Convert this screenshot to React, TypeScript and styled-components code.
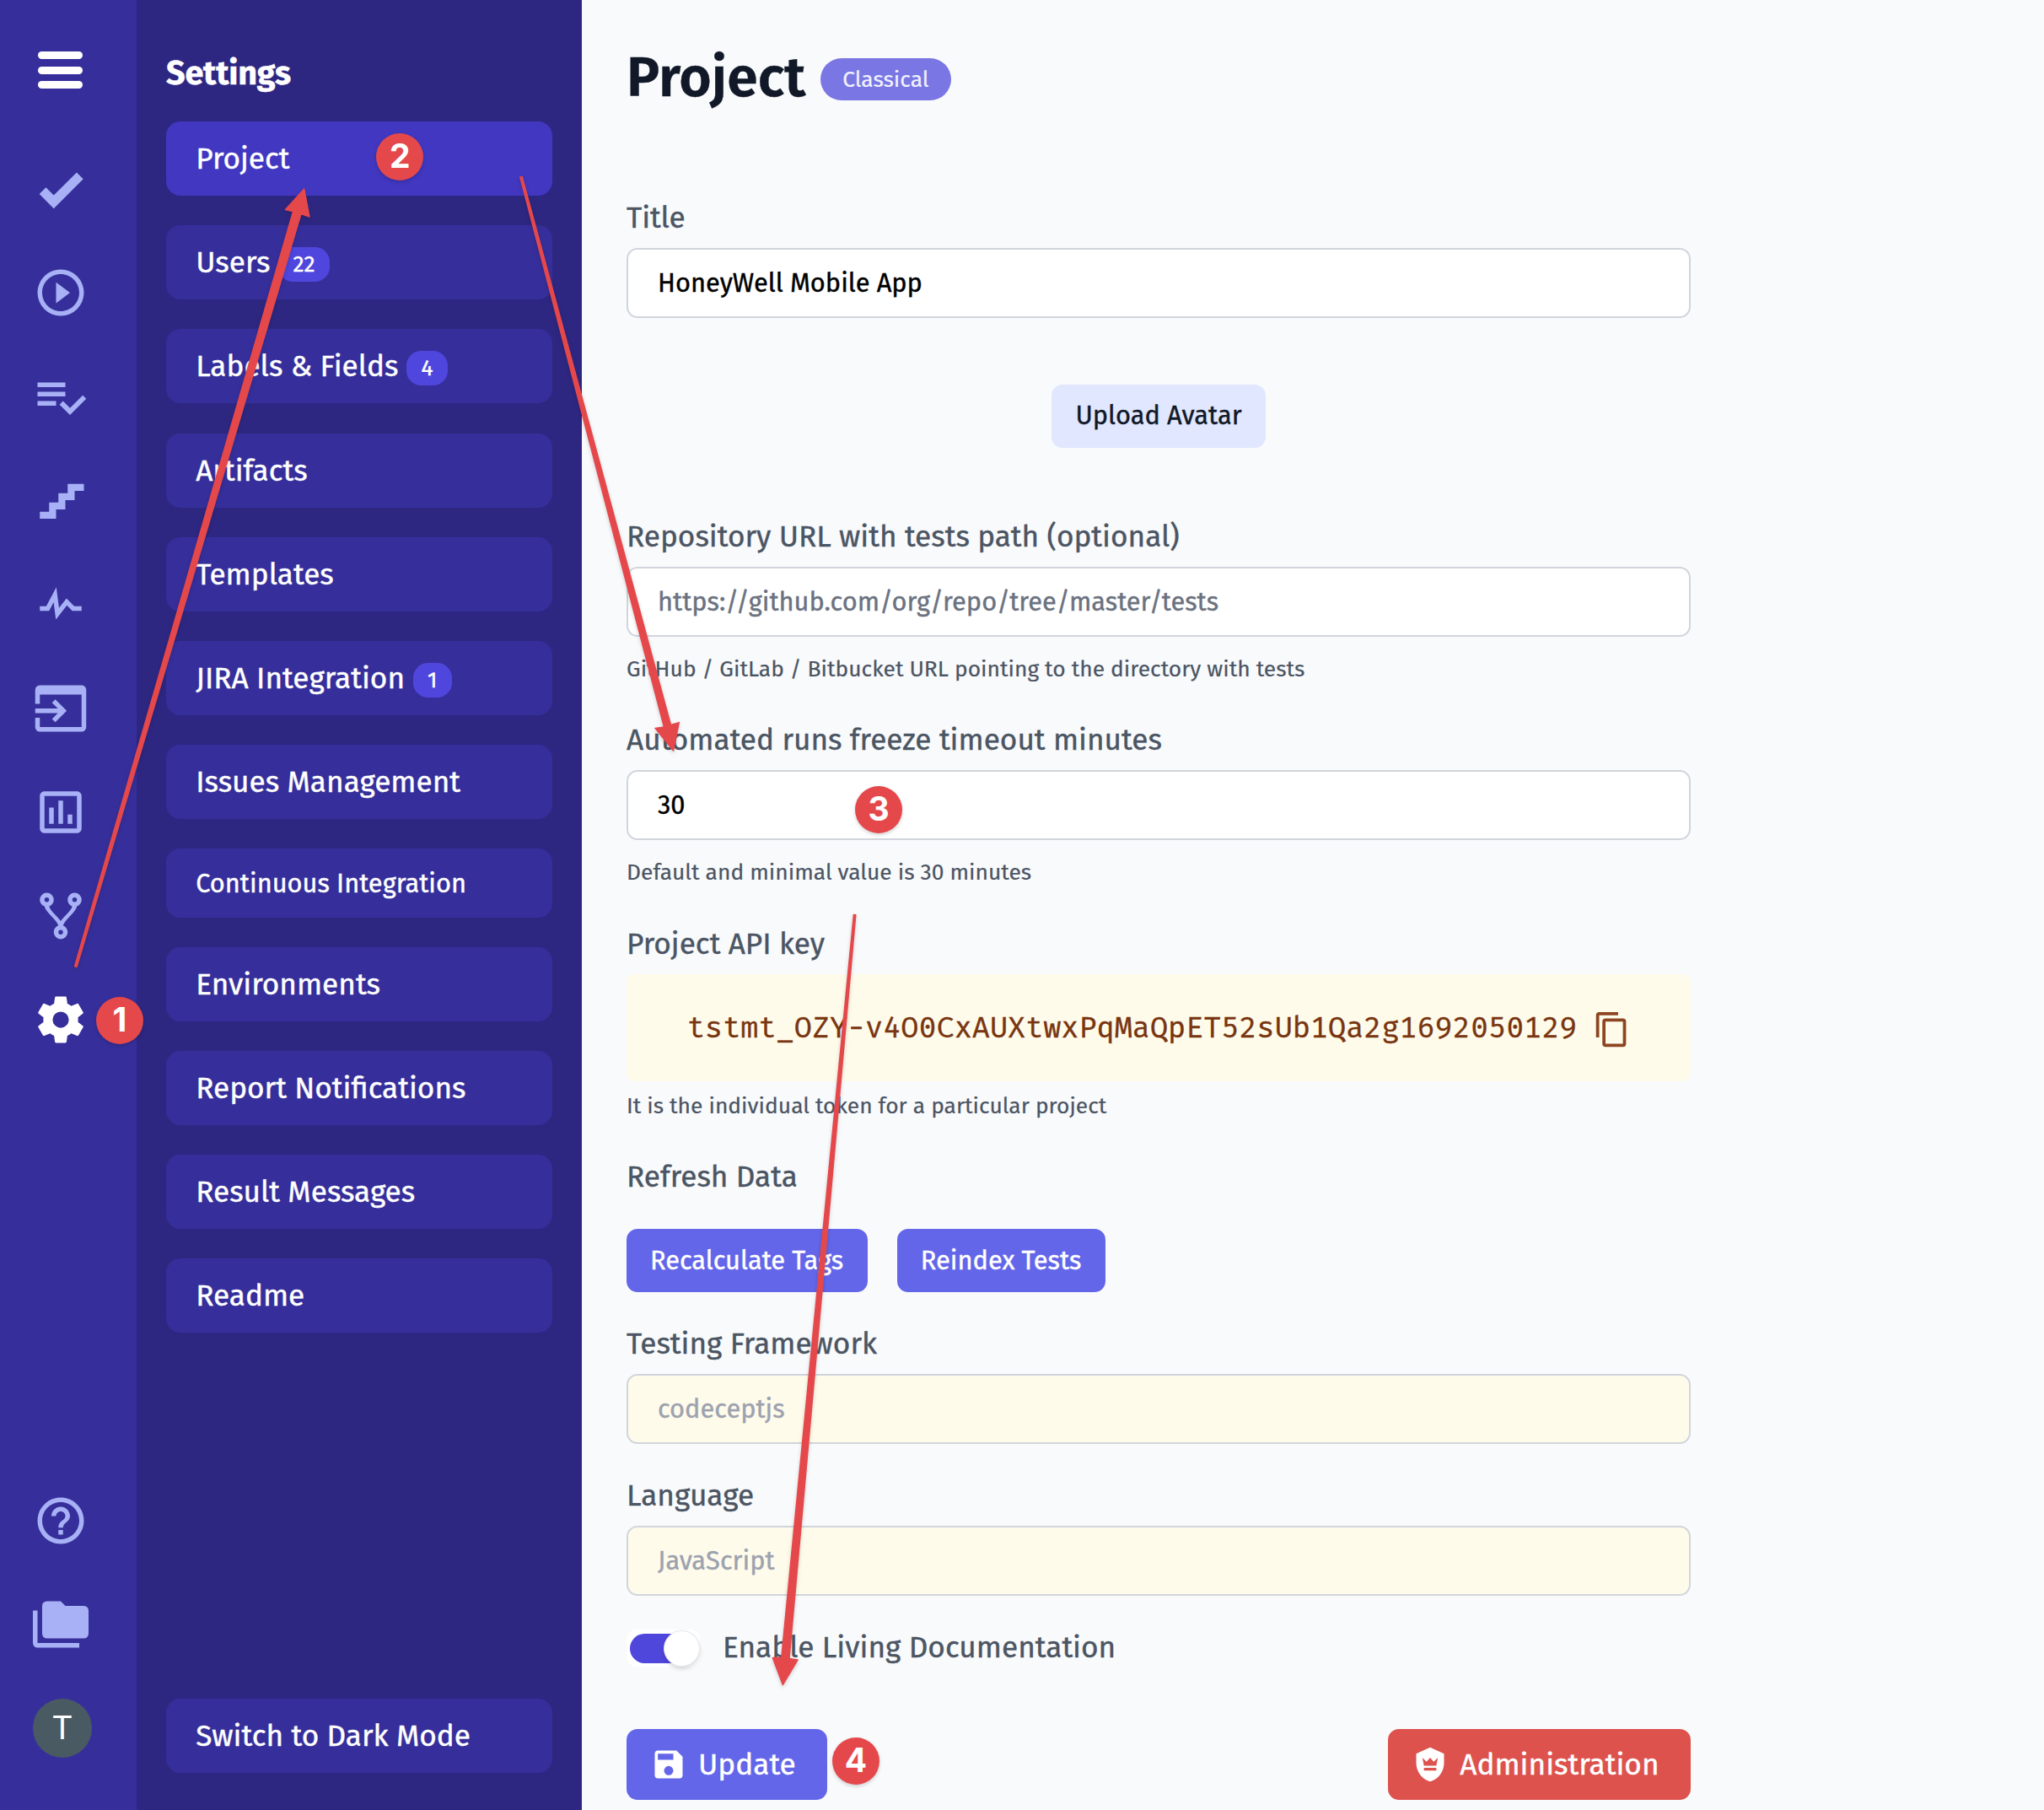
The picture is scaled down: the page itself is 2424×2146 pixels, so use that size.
import React from "react";
import styled, { createGlobalStyle } from "styled-components";

const Global = createGlobalStyle`
  * { box-sizing: border-box; }
  body { margin: 0; background: #f9fafc; }
`;
const SANS = `"Fira Sans", "Noto Sans", sans-serif`;
const MONO = `"Fira Mono", "Noto Sans Mono", "Liberation Mono", monospace`;

const Page = styled.div`
  position: relative;
  display: flex;
  width: 2424px;
  height: 2146px;
  overflow: hidden;
  background: #f9fafc;
  font-family: ${SANS};
  font-size: 35.2px;
  white-space: nowrap;
  -webkit-text-stroke: 0.4px;
`;

const Rail = styled.nav`
  display: flex;
  flex-direction: column;
  width: 162px;
  padding: 61px 0 62px 39px;
  background: #362f9b;
`;
const Burger = styled.div`
  display: flex;
  flex-direction: column;
  gap: 8.5px;
  width: 53px;
  margin: 0 0 85.7px 6px;
`;
const Bar = styled.span`
  height: 9px;
  border-radius: 4.5px;
  background: #fff;
`;
const IconList = styled.div<{ $bottom?: boolean }>`
  display: flex;
  flex-direction: column;
  gap: 57.2px;
  margin-top: ${(p) => (p.$bottom ? "auto" : "0")};
`;
const Icon = styled.svg<{ $size?: number; $color?: string }>`
  display: block;
  flex: none;
  width: ${(p) => p.$size ?? 66}px;
  height: ${(p) => p.$size ?? 66}px;
  fill: ${(p) => p.$color ?? "#a8b1f5"};
`;
const Avatar = styled.div`
  display: flex;
  align-items: center;
  justify-content: center;
  width: 70px;
  height: 70px;
  margin-top: -2.2px;
  border-radius: 50%;
  background: #4a5a62;
  color: #fff;
  font: 400 39px Roboto, sans-serif;
  -webkit-text-stroke: 0;
`;

const Panel = styled.aside`
  display: flex;
  flex-direction: column;
  width: 528px;
  padding: 63px 35px 44px;
  background: #2e2782;
  color: #fff;
`;
const PanelTitle = styled.h2`
  margin: 0 0 33px;
  font-size: 39.6px;
  line-height: 48px;
  font-weight: 700;
  letter-spacing: -0.2px;
`;
const Menu = styled.div`
  display: flex;
  flex-direction: column;
  gap: 35.2px;
  flex: 1;
`;
const MenuItem = styled.a<{ $active?: boolean; $small?: boolean; $last?: boolean }>`
  display: flex;
  align-items: center;
  height: ${(p) => (p.$small ? 81.4 : 88)}px;
  margin-top: ${(p) => (p.$last ? "auto" : "0")};
  padding: 0 35.2px;
  border-radius: 17px;
  background: ${(p) => (p.$active ? "#4137c1" : "#362f9b")};
  font-size: ${(p) => (p.$small ? 30.8 : 35.2)}px;
  font-weight: 400;
`;
const Count = styled.span`
  margin: 5px 0 0 9.5px;
  padding: 0 17.6px;
  border-radius: 17.6px;
  background: #4f46dd;
  font-size: 26.4px;
  line-height: 41px;
`;

const Main = styled.main`
  display: flex;
  flex-direction: column;
  width: 1315px;
  padding: 56px 0 0 53px;
  color: #4b5563;
`;
const Header = styled.header`
  display: flex;
  align-items: flex-start;
  height: 72px;
`;
const Title = styled.h1`
  margin: 0;
  color: #111827;
  font-size: 66px;
  line-height: 72px;
  font-weight: 600;
`;
const Pill = styled.span`
  margin: 13px 0 0 17.6px;
  padding: 0 26.4px;
  border-radius: 25px;
  background: #7a76e3;
  color: #f1f2ff;
  font-size: 26.4px;
  line-height: 50px;
  -webkit-text-stroke: 0.2px;
`;
const Field = styled.section<{ $top: number }>`
  display: flex;
  flex-direction: column;
  margin-top: ${(p) => p.$top}px;
`;
const Label = styled.label`
  line-height: 53px;
  margin-bottom: 9px;
`;
const Input = styled.div<{ $tone?: "placeholder" | "disabled" }>`
  height: 83px;
  padding: 0 35px;
  border: 2px solid #d1d5db;
  border-radius: 13px;
  background: ${(p) => (p.$tone === "disabled" ? "#fffbeb" : "#fff")};
  color: ${(p) => (p.$tone === "disabled" ? "#9ca3af" : p.$tone === "placeholder" ? "#6b7280" : "#000")};
  font-size: 30.8px;
  line-height: 79px;
`;
const Hint = styled.p<{ $top?: number }>`
  margin: ${(p) => p.$top ?? 18}px 0 0;
  font-size: 26.4px;
  line-height: 40px;
  -webkit-text-stroke: 0.2px;
`;
const UploadButton = styled.button`
  align-self: center;
  height: 75px;
  margin-top: 79px;
  padding: 0 28.6px 2px;
  border: 0;
  border-radius: 13px;
  background: #e0e7ff;
  color: #111827;
  font: 400 30.8px ${SANS};
  -webkit-text-stroke: 0.4px;
`;
const KeyBox = styled.div`
  display: flex;
  align-items: center;
  height: 127px;
  padding-left: 72px;
  border-radius: 9px;
  background: #fffbeb;
  color: #78350f;
  font-family: ${MONO};
  font-size: 35.2px;
`;
const KeyText = styled.code`
  padding-bottom: 2px;
  font-family: inherit;
  font-size: inherit;
`;
const CopyIcon = styled(Icon)`
  margin: 4px 0 0 18px;
`;
const ButtonRow = styled.div<{ $top: number; $between?: boolean }>`
  display: flex;
  gap: 35px;
  justify-content: ${(p) => (p.$between ? "space-between" : "flex-start")};
  margin-top: ${(p) => p.$top}px;
`;
const Button = styled.button<{ $large?: boolean; $danger?: boolean }>`
  display: flex;
  align-items: center;
  gap: 13px;
  height: ${(p) => (p.$large ? 84 : 75)}px;
  padding: 0 ${(p) => (p.$large ? 37.5 : 28.6)}px 1px 28px;
  border: 0;
  border-radius: 13px;
  background: ${(p) => (p.$danger ? "#dd524d" : "#6366e9")};
  color: #fff;
  font: 400 ${(p) => (p.$large ? 35.2 : 30.8)}px ${SANS};
  -webkit-text-stroke: 0.4px;
`;
const ToggleRow = styled.div`
  display: flex;
  align-items: center;
  height: 44px;
  margin-top: 40px;
`;
const Toggle = styled.div`
  display: flex;
  align-items: center;
  width: 87px;
  height: 44px;
  margin-right: 27px;
  padding-left: 4px;
  border-radius: 12px;
  background: #fff;
`;
const ToggleLabel = styled.label`
  padding-bottom: 3px;
`;
const Track = styled.span`
  width: 75px;
  height: 35px;
  margin-right: -35px;
  border-radius: 17.5px;
  background: #4f46dc;
`;
const Knob = styled.span`
  width: 43px;
  height: 43px;
  border: 1.5px solid #e5e7eb;
  border-radius: 50%;
  background: #fff;
  box-shadow: 0 3px 5px rgba(0, 0, 0, 0.14);
`;

const Overlay = styled.svg`
  position: absolute;
  inset: 0;
  fill: #e5484b;
  stroke: #e5484b;
  stroke-width: 1.5;
  stroke-linejoin: round;
  filter: drop-shadow(0 2px 2px rgba(0, 0, 0, 0.18));
`;
const Marker = styled.div<{ $x: number; $y: number }>`
  position: absolute;
  left: ${(p) => p.$x - 28}px;
  top: ${(p) => p.$y - 28}px;
  width: 56px;
  height: 56px;
  border-radius: 50%;
  background: #e5484b;
  box-shadow: 0 2px 4px rgba(0, 0, 0, 0.18);
  color: #fff;
  font: 700 39px/54px Inter, sans-serif;
  text-align: center;
  -webkit-text-stroke: 0;
`;

const Glyph = ({ d, size, color }: { d: string; size?: number; color?: string }) => (
  <Icon viewBox="0 0 24 24" $size={size} $color={color}>
    <path d={d} fillRule="evenodd" />
  </Icon>
);

const railIcons = [
  "M9,20.42L2.79,14.21L5.62,11.38L9,14.77L18.88,4.88L21.71,7.71L9,20.42Z",
  "M12,20C7.59,20 4,16.41 4,12C4,7.59 7.59,4 12,4C16.41,4 20,7.59 20,12C20,16.41 16.41,20 12,20M12,2A10,10 0 0,0 2,12A10,10 0 0,0 12,22A10,10 0 0,0 22,12A10,10 0 0,0 12,2M10,16.5L16,12L10,7.5V16.5Z",
  "M14 10H2v2h12v-2zm0-4H2v2h12V6zM2 16h8v-2H2v2zm19.5-4.5L23 13l-6.99 7-4.51-4.5L13 14l3.01 3 5.49-5.5z",
  "M15,5V9H11V13H7V17H3V20H10V16H14V12H18V8H22V5H15Z",
  "M3,13H5.79L10.1,4.79L11.28,13.75L14.5,9.66L17.83,13H21V15H17L14.67,12.67L9.92,18.73L8.94,11.31L7,15H3V13Z",
  "M1,12H10.76L8.26,9.5L9.67,8.08L14.59,13L9.67,17.92L8.26,16.5L10.76,14H1V12M21,2C22.11,2 23,2.9 23,4V20A2,2 0 0,1 21,22H3A2,2 0 0,1 1,20V16H3V20H21V6H3V10H1V4A2,2 0 0,1 3,2H21Z",
  "M19 3H5c-1.1 0-2 .9-2 2v14c0 1.1.9 2 2 2h14c1.1 0 2-.9 2-2V5c0-1.1-.9-2-2-2zm0 16H5V5h14v14zM7 10h2v7H7zM11 7h2v10h-2zM15 13h2v4h-2z",
  "M6,2A3,3 0 0,1 9,5C9,6.28 8.19,7.38 7.06,7.81C7.15,8.27 7.39,8.83 8,9.63C9,10.92 11,12.83 12,14.17C13,12.83 15,10.92 16,9.63C16.61,8.83 16.85,8.27 16.94,7.81C15.81,7.38 15,6.28 15,5A3,3 0 0,1 18,2A3,3 0 0,1 21,5C21,6.32 20.14,7.45 18.95,7.85C18.87,8.37 18.64,9 18,9.83C17,11.17 15,13.08 14,14.38C13.39,15.17 13.15,15.73 13.06,16.19C14.19,16.62 15,17.72 15,19A3,3 0 0,1 12,22A3,3 0 0,1 9,19C9,17.72 9.81,16.62 10.94,16.19C10.85,15.73 10.61,15.17 10,14.38C9,13.08 7,11.17 6,9.83C5.36,9 5.13,8.37 5.05,7.85C3.86,7.45 3,6.32 3,5A3,3 0 0,1 6,2M6,4A1,1 0 0,0 5,5A1,1 0 0,0 6,6A1,1 0 0,0 7,5A1,1 0 0,0 6,4M18,4A1,1 0 0,0 17,5A1,1 0 0,0 18,6A1,1 0 0,0 19,5A1,1 0 0,0 18,4M12,18A1,1 0 0,0 11,19A1,1 0 0,0 12,20A1,1 0 0,0 13,19A1,1 0 0,0 12,18Z",
];
const cog =
  "M12,15.5A3.5,3.5 0 0,1 8.5,12A3.5,3.5 0 0,1 12,8.5A3.5,3.5 0 0,1 15.5,12A3.5,3.5 0 0,1 12,15.5M19.43,12.97C19.47,12.65 19.5,12.33 19.5,12C19.5,11.67 19.47,11.34 19.43,11L21.54,9.37C21.73,9.22 21.78,8.95 21.66,8.73L19.66,5.27C19.54,5.05 19.27,4.96 19.05,5.05L16.56,6.05C16.04,5.66 15.5,5.32 14.87,5.07L14.5,2.42C14.46,2.18 14.25,2 14,2H10C9.75,2 9.54,2.18 9.5,2.42L9.13,5.07C8.5,5.32 7.96,5.66 7.44,6.05L4.95,5.05C4.73,4.96 4.46,5.05 4.34,5.27L2.34,8.73C2.21,8.95 2.27,9.22 2.46,9.37L4.57,11C4.53,11.34 4.5,11.67 4.5,12C4.5,12.33 4.53,12.65 4.57,12.97L2.46,14.63C2.27,14.78 2.21,15.05 2.34,15.27L4.34,18.73C4.46,18.95 4.73,19.03 4.95,18.95L7.44,17.94C7.96,18.34 8.5,18.68 9.13,18.93L9.5,21.58C9.54,21.82 9.75,22 10,22H14C14.25,22 14.46,21.82 14.5,21.58L14.87,18.93C15.5,18.67 16.04,18.34 16.56,17.94L19.05,18.95C19.27,19.03 19.54,18.95 19.66,18.73L21.66,15.27C21.78,15.05 21.73,14.78 21.54,14.63L19.43,12.97Z";
const help =
  "M11 18h2v-2h-2v2zm1-16C6.48 2 2 6.48 2 12s4.48 10 10 10 10-4.48 10-10S17.52 2 12 2zm0 18c-4.41 0-8-3.59-8-8s3.59-8 8-8 8 3.59 8 8-3.59 8-8 8zm0-14c-2.21 0-4 1.79-4 4h2c0-1.1.9-2 2-2s2 .9 2 2c0 2-3 1.75-3 5h2c0-2.25 3-2.5 3-5 0-2.21-1.79-4-4-4z";
const folders =
  "M22,4H14L12,2H6A2,2 0 0,0 4,4V16A2,2 0 0,0 6,18H22A2,2 0 0,0 24,16V6A2,2 0 0,0 22,4M2,6H0V11H0V20A2,2 0 0,0 2,22H20V20H2V6Z";
const copy =
  "M19,21H8V7H19M19,5H8A2,2 0 0,0 6,7V21A2,2 0 0,0 8,23H19A2,2 0 0,0 21,21V7A2,2 0 0,0 19,5M16,1H4A2,2 0 0,0 2,3V17H4V3H16V1Z";
const save =
  "M15,9H5V5H15M12,19A3,3 0 0,1 9,16A3,3 0 0,1 12,13A3,3 0 0,1 15,16A3,3 0 0,1 12,19M17,3H5C3.89,3 3,3.9 3,5V19A2,2 0 0,0 5,21H19A2,2 0 0,0 21,19V7L17,3Z";
const shieldCrown =
  "M12,1L3,5V11C3,16.55 6.84,21.74 12,23C17.16,21.74 21,16.55 21,11V5L12,1M16,16H8V14.2H16V16M16,12.8H8L7,7.7L9.67,10.2L12,7.7L14.33,10.2L17,7.7L16,12.8Z";

const menu: { text: string; count?: number; active?: boolean; small?: boolean }[] = [
  { text: "Project", active: true },
  { text: "Users", count: 22 },
  { text: "Labels & Fields", count: 4 },
  { text: "Artifacts" },
  { text: "Templates" },
  { text: "JIRA Integration", count: 1 },
  { text: "Issues Management" },
  { text: "Continuous Integration", small: true },
  { text: "Environments" },
  { text: "Report Notifications" },
  { text: "Result Messages" },
  { text: "Readme" },
];

export default function App() {
  return (
    <Page>
      <Global />
      <Rail>
        <Burger>
          <Bar />
          <Bar />
          <Bar />
        </Burger>
        <IconList>
          {railIcons.map((d) => (
            <Glyph key={d} d={d} />
          ))}
          <Glyph d={cog} color="#fff" />
        </IconList>
        <IconList $bottom>
          <Glyph d={help} />
          <Glyph d={folders} />
          <Avatar>T</Avatar>
        </IconList>
      </Rail>
      <Panel>
        <PanelTitle>Settings</PanelTitle>
        <Menu>
          {menu.map((m) => (
            <MenuItem key={m.text} $active={m.active} $small={m.small}>
              {m.text}
              {m.count !== undefined && <Count>{m.count}</Count>}
            </MenuItem>
          ))}
          <MenuItem $last>Switch to Dark Mode</MenuItem>
        </Menu>
      </Panel>
      <Main>
        <Header>
          <Title>Project</Title>
          <Pill>Classical</Pill>
        </Header>
        <Field $top={104}>
          <Label>Title</Label>
          <Input>HoneyWell Mobile App</Input>
        </Field>
        <UploadButton>Upload Avatar</UploadButton>
        <Field $top={79}>
          <Label>Repository URL with tests path (optional)</Label>
          <Input $tone="placeholder">https://github.com/org/repo/tree/master/tests</Input>
          <Hint>GitHub / GitLab / Bitbucket URL pointing to the directory with tests</Hint>
        </Field>
        <Field $top={38}>
          <Label>Automated runs freeze timeout minutes</Label>
          <Input>30</Input>
          <Hint>Default and minimal value is 30 minutes</Hint>
        </Field>
        <Field $top={39}>
          <Label>Project API key</Label>
          <KeyBox>
            <KeyText>tstmt_OZY-v4O0CxAUXtwxPqMaQpET52sUb1Qa2g1692050129</KeyText>
            <CopyIcon viewBox="0 0 24 24" $size={45} $color="#8c4520">
              <path d={copy} fillRule="evenodd" />
            </CopyIcon>
          </KeyBox>
          <Hint $top={9}>It is the individual token for a particular project</Hint>
        </Field>
        <Field $top={38}>
          <Label>Refresh Data</Label>
          <ButtonRow $top={26}>
            <Button>Recalculate Tags</Button>
            <Button>Reindex Tests</Button>
          </ButtonRow>
        </Field>
        <Field $top={35}>
          <Label>Testing Framework</Label>
          <Input $tone="disabled">codeceptjs</Input>
        </Field>
        <Field $top={35}>
          <Label>Language</Label>
          <Input $tone="disabled">JavaScript</Input>
        </Field>
        <ToggleRow>
          <Toggle>
            <Track />
            <Knob />
          </Toggle>
          <ToggleLabel>Enable Living Documentation</ToggleLabel>
        </ToggleRow>
        <ButtonRow $top={74} $between>
          <Button $large>
            <Glyph d={save} size={44} color="#fff" />
            Update
          </Button>
          <Button $large $danger>
            <Glyph d={shieldCrown} size={44} color="#fff" />
            Administration
          </Button>
        </ButtonRow>
      </Main>
      <Overlay width="2424" height="2146" viewBox="0 0 2424 2146">
        <path d="M88.6,1145.5L347.6,250.8L338.5,248.5L360.7,224L366.9,257L357,253.6L91,1146.5Z" />
        <path d="M616.8,210L787.5,862L777,863.4L798.5,890L805.3,856.6L795.5,859.5L619.2,209.5Z" />
        <path d="M1012.4,1084.5L926.8,1965L916.3,1965.5L928.3,1997.5L946,1968L936,1966.5L1014.8,1084.7Z" />
      </Overlay>
      <Marker $x={142} $y={1210}>1</Marker>
      <Marker $x={474.3} $y={186}>2</Marker>
      <Marker $x={1042} $y={960}>3</Marker>
      <Marker $x={1015} $y={2088}>4</Marker>
    </Page>
  );
}
